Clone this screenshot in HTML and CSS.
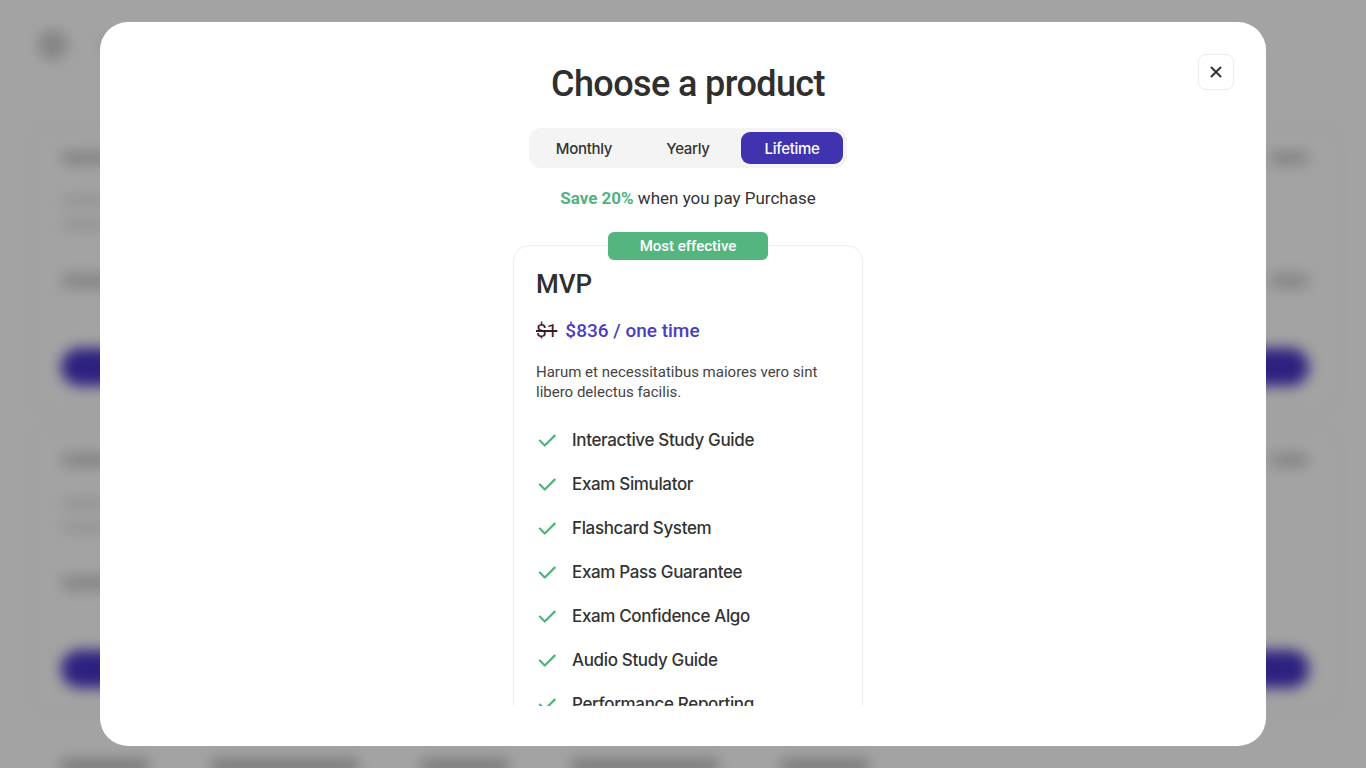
FILE: index.html
```html
<!DOCTYPE html>
<html lang="en">
<head>
<meta charset="utf-8">
<title>Choose a product</title>
<link rel="stylesheet" href="styles.css">
</head>
<body>
<div class="page">
  <header class="page-header">
    <div class="avatar"></div>
    <div class="logo-blob"></div>
  </header>
  <section class="bg-card">
    <div class="bg-row"><div class="bg-text"></div><div class="bg-text short"></div></div>
    <div class="bg-lines"><div class="bg-line"></div><div class="bg-line"></div></div>
    <div class="bg-row second"><div class="bg-text wide"></div><div class="bg-text short"></div></div>
    <div class="bg-button"></div>
  </section>
  <section class="bg-card">
    <div class="bg-row"><div class="bg-text"></div><div class="bg-text short"></div></div>
    <div class="bg-lines"><div class="bg-line"></div><div class="bg-line"></div></div>
    <div class="bg-row second"><div class="bg-text wide"></div></div>
    <div class="bg-button"></div>
  </section>
  <div class="bg-footer">
    <div class="bg-text"></div><div class="bg-text wide"></div><div class="bg-text"></div><div class="bg-text wide"></div><div class="bg-text"></div>
  </div>
</div>
<div class="overlay"></div>

<div class="modal" role="dialog" aria-label="Choose a product">
  <button class="close-btn" aria-label="Close">
    <svg width="16" height="16" viewBox="0 0 16 16" fill="none" stroke="#333" stroke-width="2" stroke-linecap="round"><path d="M3.5 3.5l9 9M12.5 3.5l-9 9"/></svg>
  </button>
  <div class="modal-body">
    <h1 class="title">Choose a product</h1>
    <div class="toggle">
      <button class="toggle-btn">Monthly</button>
      <button class="toggle-btn">Yearly</button>
      <button class="toggle-btn active">Lifetime</button>
    </div>
    <p class="save"><strong>Save 20%</strong> when you pay Purchase</p>
    <div class="plan">
      <div class="badge">Most effective</div>
      <h2 class="plan-name">MVP</h2>
      <div class="price"><s class="old">$1</s><span class="new">$836 / one time</span></div>
      <p class="desc">Harum et necessitatibus maiores vero sint libero delectus facilis.</p>
      <ul class="features">
        <li><svg class="check" viewBox="0 0 20 20" fill="none" stroke="#52b27e" stroke-width="2" stroke-linecap="round" stroke-linejoin="round"><path d="M3.5 10.5l4.5 4.5 9-9"/></svg>Interactive Study Guide</li>
        <li><svg class="check" viewBox="0 0 20 20" fill="none" stroke="#52b27e" stroke-width="2" stroke-linecap="round" stroke-linejoin="round"><path d="M3.5 10.5l4.5 4.5 9-9"/></svg>Exam Simulator</li>
        <li><svg class="check" viewBox="0 0 20 20" fill="none" stroke="#52b27e" stroke-width="2" stroke-linecap="round" stroke-linejoin="round"><path d="M3.5 10.5l4.5 4.5 9-9"/></svg>Flashcard System</li>
        <li><svg class="check" viewBox="0 0 20 20" fill="none" stroke="#52b27e" stroke-width="2" stroke-linecap="round" stroke-linejoin="round"><path d="M3.5 10.5l4.5 4.5 9-9"/></svg>Exam Pass Guarantee</li>
        <li><svg class="check" viewBox="0 0 20 20" fill="none" stroke="#52b27e" stroke-width="2" stroke-linecap="round" stroke-linejoin="round"><path d="M3.5 10.5l4.5 4.5 9-9"/></svg>Exam Confidence Algo</li>
        <li><svg class="check" viewBox="0 0 20 20" fill="none" stroke="#52b27e" stroke-width="2" stroke-linecap="round" stroke-linejoin="round"><path d="M3.5 10.5l4.5 4.5 9-9"/></svg>Audio Study Guide</li>
        <li><svg class="check" viewBox="0 0 20 20" fill="none" stroke="#52b27e" stroke-width="2" stroke-linecap="round" stroke-linejoin="round"><path d="M3.5 10.5l4.5 4.5 9-9"/></svg>Performance Reporting</li>
        <li><svg class="check" viewBox="0 0 20 20" fill="none" stroke="#52b27e" stroke-width="2" stroke-linecap="round" stroke-linejoin="round"><path d="M3.5 10.5l4.5 4.5 9-9"/></svg>Mobile App Access</li>
      </ul>
    </div>
  </div>
</div>
</body>
</html>
```

FILE: styles.css
```css
* { box-sizing: border-box; }
html, body { margin: 0; padding: 0; }
body {
  width: 1366px;
  height: 768px;
  overflow: hidden;
  background: #fff;
  font-family: "Roboto", "Inter", sans-serif;
  color: #333;
}

/* Background page (blurred under the dialog) */
.page {
  filter: blur(7px);
  padding: 30px 56px 0 60px;
  display: flex;
  flex-direction: column;
}
.page-header {
  display: flex;
  align-items: center;
  gap: 30px;
  height: 30px;
  margin-left: -22px;
  margin-bottom: 65px;
}
.avatar { width: 30px; height: 30px; border-radius: 50%; background: #cfcfcf; }
.logo-blob { width: 40px; height: 12px; background: #e2e2e2; border-radius: 6px; }
.bg-card {
  display: flex;
  flex-direction: column;
  padding: 25px 30px 25px;
  border: 1px solid #ededed;
  border-radius: 16px;
  margin: 0 -30px 15px;
}
.bg-row { display: flex; justify-content: space-between; }
.bg-row.second { margin-top: 44px; }
.bg-text { width: 90px; height: 14px; background: #cfcfcf; border-radius: 7px; }
.bg-text.short { width: 40px; }
.bg-text.wide { width: 150px; }
.bg-lines { display: flex; flex-direction: column; gap: 14px; margin-top: 31px; }
.bg-line { width: 70px; height: 10px; background: #e6e6e6; border-radius: 5px; }
.bg-button { height: 38px; border-radius: 19px; background: #4735c9; margin-top: 60px; }
.bg-footer { display: flex; gap: 60px; padding-top: 30px; }
.bg-footer .bg-text { background: #bdbdbd; }

.overlay {
  position: fixed;
  inset: 0;
  background: rgba(0, 0, 0, 0.36);
}

/* Dialog */
.modal {
  position: fixed;
  left: 100px;
  top: 22px;
  width: 1166px;
  height: 724px;
  background: #fff;
  border-radius: 28px;
  padding: 40px 0 40px 10px;
  display: flex;
  flex-direction: column;
}
.close-btn {
  position: absolute;
  top: 32px;
  right: 32px;
  width: 36px;
  height: 36px;
  border: 1px solid #ececec;
  border-radius: 8px;
  background: #fff;
  display: flex;
  align-items: center;
  justify-content: center;
  padding: 0;
}
.modal-body {
  flex: 1;
  overflow: hidden;
  display: flex;
  flex-direction: column;
  align-items: center;
}
.title {
  margin: 0;
  font-size: 36px;
  line-height: 44px;
  font-weight: 500;
  letter-spacing: -0.6px;
  color: #2f2f2f;
}
.toggle {
  margin-top: 22px;
  display: flex;
  gap: 2px;
  padding: 4px;
  background: #f4f4f4;
  border-radius: 12px;
}
.toggle-btn {
  width: 102px;
  height: 32px;
  border: 0;
  border-radius: 9px;
  background: transparent;
  font-family: "Inter", "Roboto", sans-serif;
  font-size: 15px;
  font-weight: 500;
  letter-spacing: -0.3px;
  color: #333;
  padding: 0;
}
.toggle-btn.active { background: #4033b0; color: #fff; }
.save {
  margin: 18px 0 0;
  font-size: 17px;
  line-height: 24px;
  color: #333;
}
.save strong { color: #52b27e; font-weight: 700; }

.plan {
  position: relative;
  margin-top: 35px;
  width: 350px;
  flex-shrink: 0;
  border: 1px solid #eeeeee;
  border-radius: 16px;
  padding: 22px 22px 30px;
}
.badge {
  position: absolute;
  top: -14px;
  left: 50%;
  transform: translateX(-50%);
  width: 160px;
  height: 28px;
  border-radius: 6px;
  background: #55b57f;
  color: #fff;
  font-size: 15px;
  font-weight: 500;
  line-height: 28px;
  text-align: center;
}
.plan-name {
  margin: 0;
  font-size: 26px;
  line-height: 32px;
  font-weight: 500;
  color: #2f2f2f;
}
.price {
  margin-top: 17px;
  display: flex;
  gap: 8px;
  font-size: 19px;
  line-height: 28px;
  font-weight: 500;
}
.old { color: #3d1b2a; font-weight: 400; text-decoration-thickness: 1.5px; }
.new { color: #4a3dc2; }
.desc {
  margin: 17px 0 0;
  font-size: 15px;
  line-height: 20px;
  color: #444;
  padding-right: 20px;
}
.features {
  list-style: none;
  margin: 26px 0 0;
  padding: 0;
  display: flex;
  flex-direction: column;
  gap: 20px;
}
.features li {
  display: flex;
  align-items: center;
  gap: 14px;
  font-family: "Inter", "Roboto", sans-serif;
  font-size: 17px;
  line-height: 24px;
  font-weight: 500;
  letter-spacing: -0.35px;
  color: #333;
}
.check { width: 22px; height: 22px; flex-shrink: 0; }
```
